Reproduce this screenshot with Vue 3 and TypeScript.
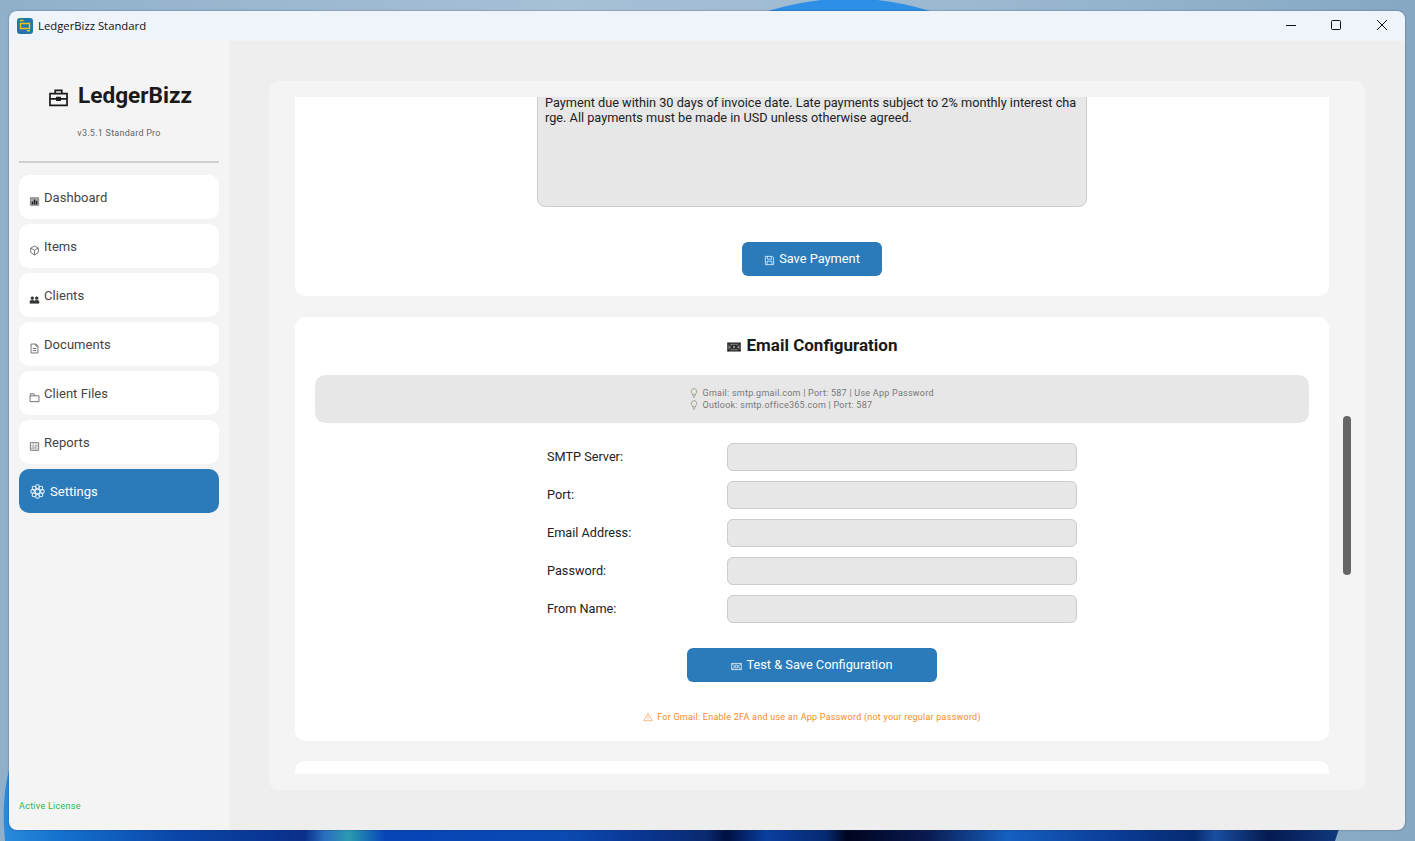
<script setup lang="ts">
import { onMounted, ref } from 'vue';

function circle(cx: number, cy: number, r: number) {
  return `M${cx - r} ${cy}a${r} ${r} 0 1 1 ${r * 2} 0a${r} ${r} 0 1 1 ${-r * 2} 0z`;
}

const gearLobes = [0, 1, 2, 3, 4, 5, 6, 7].map((i) => {
  const angle = (i * Math.PI) / 4;
  return circle(8 + 5.2 * Math.cos(angle), 8 + 5.2 * Math.sin(angle), 2);
});

const icons: Record<string, string[]> = {
  chart: ['M2 2.500h12v11H2z', 'M5 12.500V8', 'M8 12.500V5', 'M11 12.500V7'],
  box: ['M8 1.500l5.500 3v6.500L8 14.500l-5.500-3.500V4.500z', 'M2.500 4.500L8 7.500l5.500-3', 'M8 7.500v7'],
  people: [circle(4.800, 6, 2), circle(11.200, 6, 2), 'M1.500 13.500v-3q0-1.500 3.300-1.500t3.200 1.500q0-1.500 3.200-1.500t3.300 1.500v3z'],
  doc: ['M3 1.500h7l3 3v10H3z', 'M10 1.500v3h3', 'M5.500 8h5', 'M5.500 11h5'],
  folder: ['M1.500 5.500v8.500h13v-8.500z', 'M2 5.500v-3h5l1.500 3'],
  trend: ['M2 2.500h12v11H2z', 'M2 7h12', 'M2 10.500h12', 'M6 2.500v11', 'M10 2.500v11', 'M3 12l4-4 2 2 4-5'],
  gear: [circle(8, 8, 2.500), ...gearLobes],
  save: ['M2 2h10l2 2v10H2z', 'M5 2v4h6V2', 'M4.500 14V9h7v5'],
  mail: ['M1 3.500h14v9H1z', 'M1 3.500l4.500 4.500', 'M15 3.500L10.500 8', 'M1 12.500l4.500-4', 'M15 12.500l-4.500-4', 'M6 6h4v4H6z'],
  bulb: ['M8 1a4.500 4.500 0 0 1 2.500 8.200V11h-5V9.200A4.500 4.500 0 0 1 8 1z', 'M6 13h4', 'M7 15h2'],
  warn: ['M8 2l6.800 12H1.200z', 'M8 6.500v4', 'M8 11.800v.8'],
  briefcase: ['M1.500 5h13v9h-13z', 'M5.500 5V2.500h5V5', 'M1.500 9h13', 'M6.800 8h2.400v2H6.800z'],
};

const navItems = [
  { label: 'Dashboard', icon: 'chart' },
  { label: 'Items', icon: 'box' },
  { label: 'Clients', icon: 'people' },
  { label: 'Documents', icon: 'doc' },
  { label: 'Client Files', icon: 'folder' },
  { label: 'Reports', icon: 'trend' },
  { label: 'Settings', icon: 'gear', active: true },
];

const smtpFields = ['SMTP Server:', 'Port:', 'Email Address:', 'Password:', 'From Name:'];

const paymentTerms =
  'Payment due within 30 days of invoice date. Late payments subject to 2% monthly interest charge. All payments must be made in USD unless otherwise agreed.';

const scroller = ref<HTMLElement | null>(null);

// the settings page is shown scrolled down to the email section
onMounted(() => {
  if (scroller.value) scroller.value.scrollTop = 30;
});
</script>

<template>
  <div class="desktop">
    <svg class="wallpaper" viewBox="0 0 1415 841" width="1415" height="841" aria-hidden="true">
      <defs>
        <linearGradient id="strip" x1="0" y1="0" x2="1" y2="0">
          <stop offset="0" stop-color="#2a8bdc" />
          <stop offset="0.045" stop-color="#1470cc" />
          <stop offset="0.13" stop-color="#0a46a8" />
          <stop offset="0.225" stop-color="#0a2f8a" />
          <stop offset="0.24" stop-color="#2a6fc0" />
          <stop offset="0.258" stop-color="#2a9ab0" />
          <stop offset="0.285" stop-color="#0744b8" />
          <stop offset="0.42" stop-color="#0b4ab0" />
          <stop offset="0.465" stop-color="#0a3a9a" />
          <stop offset="0.525" stop-color="#0a2a70" />
          <stop offset="0.54" stop-color="#001040" />
          <stop offset="0.57" stop-color="#0a3fa0" />
          <stop offset="0.615" stop-color="#052a70" />
          <stop offset="0.63" stop-color="#000520" />
          <stop offset="0.69" stop-color="#0a1a50" />
          <stop offset="0.75" stop-color="#1560c0" />
          <stop offset="0.825" stop-color="#0b3f9a" />
          <stop offset="0.89" stop-color="#062a70" />
          <stop offset="0.905" stop-color="#1a4fa0" />
          <stop offset="0.945" stop-color="#051a50" />
          <stop offset="1" stop-color="#123a80" />
        </linearGradient>
      </defs>
      <path d="M768 11Q850-14 930 11z" fill="#2d8fe6" />
      <path d="M9 770Q1 800 5 841H1335L1342 820H9z" fill="url(#strip)" />
    </svg>

    <div class="window">
      <header class="titlebar">
        <svg class="app-icon" viewBox="0 0 16 16" width="16" height="16">
          <rect width="16" height="16" rx="3" fill="#1f77ad" />
          <path d="M3.500 5.500h9v5h-9z" fill="none" stroke="#f2c21a" stroke-width="1.400" />
          <path d="M3 2.500h3.500M10 12.800h3" stroke="#f2c21a" stroke-width="1.400" />
        </svg>
        <span class="app-title">LedgerBizz Standard</span>
        <div class="controls">
          <svg viewBox="0 0 10 10" width="10" height="10"><path d="M0 5.500h10" /></svg>
          <svg viewBox="0 0 10 10" width="10" height="10"><rect x="0.500" y="0.500" width="9" height="9" rx="1" /></svg>
          <svg viewBox="0 0 10 10" width="10" height="10"><path d="M0 0l10 10M10 0L0 10" /></svg>
        </div>
      </header>

      <div class="body">
        <aside class="sidebar">
          <div class="brand">
            <svg class="brand-icon" viewBox="0 0 16 16" width="21" height="21">
              <path v-for="d in icons.briefcase" :key="d" :d="d" />
            </svg>
            <span class="brand-name">LedgerBizz</span>
          </div>
          <div class="version">v3.5.1 Standard Pro</div>
          <div class="divider"></div>
          <nav class="nav">
            <div
              v-for="item in navItems"
              :key="item.label"
              class="nav-item"
              :class="{ active: item.active }"
            >
              <svg class="nav-icon" :class="`icon-${item.icon}`" viewBox="0 0 16 16">
                <path v-for="d in icons[item.icon]" :key="d" :d="d" />
              </svg>
              <span>{{ item.label }}</span>
            </div>
          </nav>
          <div class="license">Active License</div>
        </aside>

        <main class="main">
          <div class="panel">
            <div ref="scroller" class="scroller">
              <section class="card payment">
                <textarea class="terms" readonly :value="paymentTerms"></textarea>
                <button class="btn save-btn">
                  <svg class="btn-icon" viewBox="0 0 16 16">
                    <path v-for="d in icons.save" :key="d" :d="d" />
                  </svg>
                  Save Payment
                </button>
              </section>

              <section class="card email">
                <h2 class="card-title">
                  <svg class="title-icon" viewBox="0 0 16 16">
                    <path d="M1 3.500h14v9H1z" class="filled" />
                    <path v-for="d in icons.mail" :key="d" :d="d" />
                  </svg>
                  Email Configuration
                </h2>
                <div class="hint">
                  <div class="hint-line">
                    <svg class="hint-icon" viewBox="0 0 16 16"><path v-for="d in icons.bulb" :key="d" :d="d" /></svg>
                    Gmail: smtp.gmail.com | Port: 587 | Use App Password
                  </div>
                  <div class="hint-line">
                    <svg class="hint-icon" viewBox="0 0 16 16"><path v-for="d in icons.bulb" :key="d" :d="d" /></svg>
                    Outlook: smtp.office365.com | Port: 587
                  </div>
                </div>
                <div class="form">
                  <label v-for="field in smtpFields" :key="field" class="form-row">
                    <span class="form-label">{{ field }}</span>
                    <input class="form-input" type="text" />
                  </label>
                </div>
                <button class="btn test-btn">
                  <svg class="btn-icon" viewBox="0 0 16 16">
                    <path v-for="d in icons.mail" :key="d" :d="d" />
                  </svg>
                  Test &amp; Save Configuration
                </button>
                <p class="warning">
                  <svg class="warn-icon" viewBox="0 0 16 16"><path v-for="d in icons.warn" :key="d" :d="d" /></svg>
                  For Gmail: Enable 2FA and use an App Password (not your regular password)
                </p>
              </section>

              <section class="card next"></section>
            </div>
            <div class="thumb"></div>
          </div>
        </main>
      </div>
    </div>
  </div>
</template>

<style scoped>
.desktop {
  position: relative;
  width: 1415px;
  height: 841px;
  padding: 11px 10px 11px 9px;
  box-sizing: border-box;
  overflow: hidden;
  background: linear-gradient(90deg, #90b0ca 0%, #a6c0d6 40%, #9ab8d0 70%, #86a8c3 100%);
  font-family: Roboto, sans-serif;
  color: #333;
}

.wallpaper {
  position: absolute;
  left: 0;
  top: 0;
}

.window {
  position: relative;
  height: 100%;
  display: flex;
  flex-direction: column;
  border-radius: 8px;
  overflow: hidden;
  box-shadow: 0 0 2px rgba(40, 50, 70, 0.6);
}

.titlebar {
  height: 30px;
  flex: none;
  display: flex;
  align-items: center;
  padding: 0 8px 2px;
  box-sizing: border-box;
  background: #eff4fb;
}

.app-icon {
  flex: none;
  margin-top: 2px;
}

.app-title {
  margin-left: 5px;
  font-family: 'Open Sans', sans-serif;
  font-size: 11.300px;
  color: #111;
}

.controls {
  margin-left: auto;
  display: flex;
  gap: 35px;
  padding-right: 10px;
}

.controls svg {
  fill: none;
  stroke: #111;
  stroke-width: 1;
}

.controls svg:last-child {
  margin-left: 1px;
}

.body {
  flex: 1;
  min-height: 0;
  display: flex;
}

.sidebar {
  width: 220px;
  flex: none;
  box-sizing: border-box;
  display: flex;
  flex-direction: column;
  padding: 0 10px 18px;
  background: #f4f4f4;
}

.brand {
  margin-top: 41px;
  padding-left: 2px;
  display: flex;
  align-items: center;
  justify-content: center;
  gap: 9px;
  height: 26px;
}

.brand-icon {
  margin-top: 4px;
  fill: none;
  stroke: #1a1a1a;
  stroke-width: 1.300;
}

.brand-name {
  font-size: 22.600px;
  font-weight: 700;
  color: #1a1a1a;
}

.version {
  margin-top: 19px;
  text-align: center;
  font-size: 9px;
  letter-spacing: 0.250px;
  line-height: 12px;
  color: #666;
}

.divider {
  margin-top: 22px;
  height: 2px;
  background: #cfcfcf;
}

.nav {
  margin-top: 12px;
  display: flex;
  flex-direction: column;
  gap: 5px;
}

.nav-item {
  height: 44px;
  display: flex;
  align-items: center;
  padding-left: 10px;
  border-radius: 10px;
  background: #fff;
  font-size: 13px;
  letter-spacing: 0.050px;
  color: #444;
}

.nav-icon {
  width: 11px;
  height: 11px;
  margin-right: 4px;
  margin-top: 8px;
  fill: none;
  stroke: #666;
  stroke-width: 1.300;
}

.icon-chart path {
  stroke: #222;
  stroke-width: 2.200;
}

.icon-chart path:first-child {
  fill: #a8a8a8;
  stroke: #777;
  stroke-width: 1.200;
}

.icon-people path {
  fill: #333;
  stroke: #333;
  stroke-width: 0.800;
}

.icon-trend path {
  stroke: #999;
  stroke-width: 0.900;
}

.icon-trend path:first-child {
  stroke: #666;
  stroke-width: 1.300;
}

.nav-item.active {
  background: #2b7bba;
  color: #fff;
}

.nav-item.active .nav-icon {
  width: 15px;
  height: 15px;
  margin-left: 1px;
  margin-right: 5px;
  margin-top: 0;
  stroke: #e4eff8;
  stroke-width: 1.100;
}

.license {
  margin-top: auto;
  font-size: 9px;
  letter-spacing: 0.280px;
  line-height: 12px;
  color: #1cb94e;
}

.main {
  flex: 1;
  min-width: 0;
  box-sizing: border-box;
  padding: 40px;
  background: #eeeeee;
}

.panel {
  position: relative;
  height: 100%;
  box-sizing: border-box;
  padding: 16px 36px 16px 26px;
  border-radius: 10px;
  background: #f4f4f4;
}

.scroller {
  height: 100%;
  overflow: hidden;
  display: flex;
  flex-direction: column;
  gap: 20px;
}

.thumb {
  position: absolute;
  right: 14px;
  top: 335px;
  width: 8px;
  height: 159px;
  border-radius: 4px;
  background: #666;
}

.card {
  flex: none;
  display: flex;
  flex-direction: column;
  align-items: center;
  box-sizing: border-box;
  border-radius: 10px;
  background: #fff;
}

.payment {
  padding: 20px 0 20px;
  margin-bottom: 1px;
}

.terms {
  display: block;
  width: 550px;
  height: 120px;
  box-sizing: border-box;
  padding: 7px 7px;
  border: 1px solid #cccccc;
  border-radius: 8px;
  background: #e7e7e7;
  resize: none;
  outline: none;
  overflow: hidden;
  word-break: break-all;
  font-family: Roboto, sans-serif;
  font-size: 12.720px;
  line-height: 15px;
  color: #222;
}

.btn {
  display: flex;
  align-items: center;
  justify-content: center;
  height: 34px;
  padding: 0 0 2px;
  border: none;
  border-radius: 6px;
  background: #2b7bba;
  font-family: Roboto, sans-serif;
  font-size: 12.800px;
  color: #fff;
}

.btn-icon {
  width: 11px;
  height: 11px;
  margin-right: 4px;
  margin-top: 5px;
  fill: none;
  stroke: #dbe9f5;
  stroke-width: 1.300;
}

.save-btn {
  width: 140px;
  margin-top: 35px;
}

.email {
  padding: 18px 20px 18px;
}

.card-title {
  margin: 0;
  display: flex;
  align-items: center;
  height: 20px;
  font-size: 17px;
  font-weight: 700;
  line-height: 20px;
  color: #1a1a1a;
}

.title-icon {
  width: 14px;
  height: 14px;
  margin-right: 6px;
  margin-top: 4px;
  fill: none;
  stroke: #222;
  stroke-width: 1.400;
}

.title-icon .filled {
  fill: #888;
  stroke: none;
}

.hint {
  margin-top: 20px;
  align-self: stretch;
  height: 48px;
  display: flex;
  flex-direction: column;
  align-items: center;
  justify-content: center;
  border-radius: 10px;
  background: #e7e7e7;
  font-size: 9px;
  letter-spacing: 0.250px;
  line-height: 12px;
  color: #777;
}

.hint-line {
  width: 245px;
  display: flex;
  align-items: center;
  white-space: nowrap;
}

.hint-icon {
  width: 10px;
  height: 10px;
  margin-left: -1px;
  margin-right: 4px;
  fill: none;
  stroke: #8c8c70;
  stroke-width: 1.200;
}

.form {
  margin-top: 20px;
  display: flex;
  flex-direction: column;
  gap: 10px;
}

.form-row {
  display: flex;
  align-items: center;
  width: 530px;
}

.form-label {
  width: 180px;
  flex: none;
  margin-bottom: 2px;
  font-size: 12.700px;
  color: #222;
}

.form-input {
  width: 350px;
  height: 28px;
  box-sizing: border-box;
  border: 1px solid #cccccc;
  border-radius: 6px;
  background: #e7e7e7;
  outline: none;
}

.test-btn {
  width: 250px;
  margin-top: 25px;
}

.warning {
  margin: 29px 0 0;
  display: flex;
  align-items: center;
  font-size: 9px;
  letter-spacing: 0.240px;
  line-height: 12px;
  color: #f58a24;
}

.warn-icon {
  width: 10px;
  height: 10px;
  margin-right: 4px;
  fill: none;
  stroke: #f2a45c;
  stroke-width: 1.200;
}

.next {
  height: 120px;
}
</style>

<style>
html,
body {
  margin: 0;
  overflow: hidden;
}
</style>
